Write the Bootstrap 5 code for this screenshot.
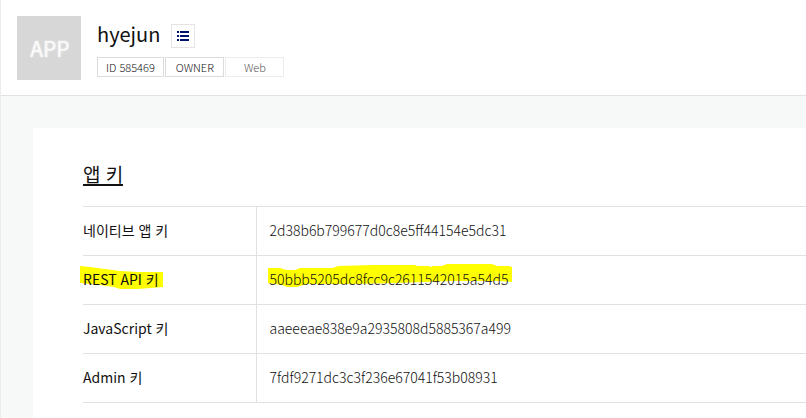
<!DOCTYPE html>
<html lang="ko">
<head>
<meta charset="utf-8">
<meta name="viewport" content="width=device-width, initial-scale=1">
<title>hyejun</title>
<link href="https://cdn.jsdelivr.net/npm/bootstrap@5.3.0/dist/css/bootstrap.min.css" rel="stylesheet">
<style>
  body { font-family: "Noto Sans CJK KR", sans-serif; font-size: 14px; line-height: 20px; color: #111; background: #f7f9f8; border-left: 1px solid #ececec; }
  .app-header { border-bottom: 1px solid #e1e3e3; padding: 16px 16px 15px; }
  .app-thumb { width: 64px; height: 64px; background: #d7d7d7; color: #fafafa; font-size: 21px; font-weight: 400; line-height: 24px; text-shadow: 0 0 2px #fff; padding-left: 2px; }
  .app-info { padding: 8px 0 3px; }
  .app-name { font-size: 20px; line-height: 20px; font-weight: 400; }
  .list-btn { width: 24px; height: 24px; margin-left: 11px; background: #fff; border: 1px solid #e3e3e3; }
  .tags { gap: 1px; }
  .tag { height: 20px; border: 1px solid #dcdcdc; font-size: 11px; font-weight: 300; line-height: 18px; color: #111; padding: 0 8px; }
  .tag-owner { padding-left: 10px; padding-right: 9px; }
  .tag-web { border-color: #ececec; color: #555; padding-left: 18px; padding-right: 17px; }
  .app-main { padding: 32px 0 0 32px; }
  .key-panel { padding: 36px 0 32px 50px; }
  .key-title { font-size: 19px; line-height: 20px; font-weight: 400; margin-bottom: 20px; }
  .key-title span { border-bottom: 2px solid #111; }
  .key-table { width: 100%; border-collapse: collapse; table-layout: fixed; }
  .key-table th, .key-table td { height: 49px; border-top: 1px solid #e1e1e1; border-bottom: 1px solid #e1e1e1; padding: 0 0 2px; }
  .key-table th { width: 173px; font-weight: 400; border-right: 1px solid #e1e1e1; }
  .key-table td { font-weight: 300; color: #111; padding-left: 13px; }
  .marked { position: relative; display: inline-block; z-index: 0; }
  .marked svg { position: absolute; z-index: -1; left: -3px; top: -5px; fill: #ff0; }
</style>
<script src="https://cdn.jsdelivr.net/npm/bootstrap@5.3.0/dist/js/bootstrap.bundle.min.js" defer></script>
</head>
<body>
<header class="app-header bg-white d-flex gap-3">
  <div class="app-thumb d-flex align-items-center justify-content-center">APP</div>
  <div class="app-info d-flex flex-column justify-content-between">
    <div class="d-flex align-items-start">
      <h1 class="app-name mb-0">hyejun</h1>
      <button type="button" class="list-btn p-0 d-flex align-items-center justify-content-center" aria-label="List">
        <svg width="12" height="10" viewBox="0 0 12 10" fill="#00126b" shape-rendering="crispEdges" aria-hidden="true">
          <path d="M0 0h2v2H0zM3 0h9v2H3zM0 4h2v2H0zM3 4h9v2H3zM0 8h2v2H0zM3 8h9v2H3z"/>
        </svg>
      </button>
    </div>
    <div class="d-flex tags">
      <span class="tag">ID 585469</span>
      <span class="tag tag-owner">OWNER</span>
      <span class="tag tag-web">Web</span>
    </div>
  </div>
</header>
<main class="app-main">
  <section class="key-panel bg-white">
    <h2 class="key-title d-flex"><span>앱 키</span></h2>
    <table class="key-table">
      <tbody>
        <tr><th scope="row">네이티브 앱 키</th><td>2d38b6b799677d0c8e5ff44154e5dc31</td></tr>
        <tr>
          <th scope="row"><span class="marked"><svg width="84" height="26" aria-hidden="true"><path d="M0 2L10 3L25 5L40 7L58 8H83V23L58 25H40L34 23L20 21L0 19Z"/></svg>REST API 키</span></th>
          <td><span class="marked"><svg width="246" height="26" aria-hidden="true"><path d="M1 4H13L19 6H28L33 4H66L71 2L106 1H148L150 2H162L164 3L166 2H175L180 0H225L230 2H242L245 3V18L230 17H185L130 19L85 20H40L33 22L30 23H20L15 21L1 19Z"/></svg>50bbb5205dc8fcc9c2611542015a54d5</span></td>
        </tr>
        <tr><th scope="row">JavaScript 키</th><td>aaeeeae838e9a2935808d5885367a499</td></tr>
        <tr><th scope="row">Admin 키</th><td>7fdf9271dc3c3f236e67041f53b08931</td></tr>
      </tbody>
    </table>
  </section>
</main>
</body>
</html>
